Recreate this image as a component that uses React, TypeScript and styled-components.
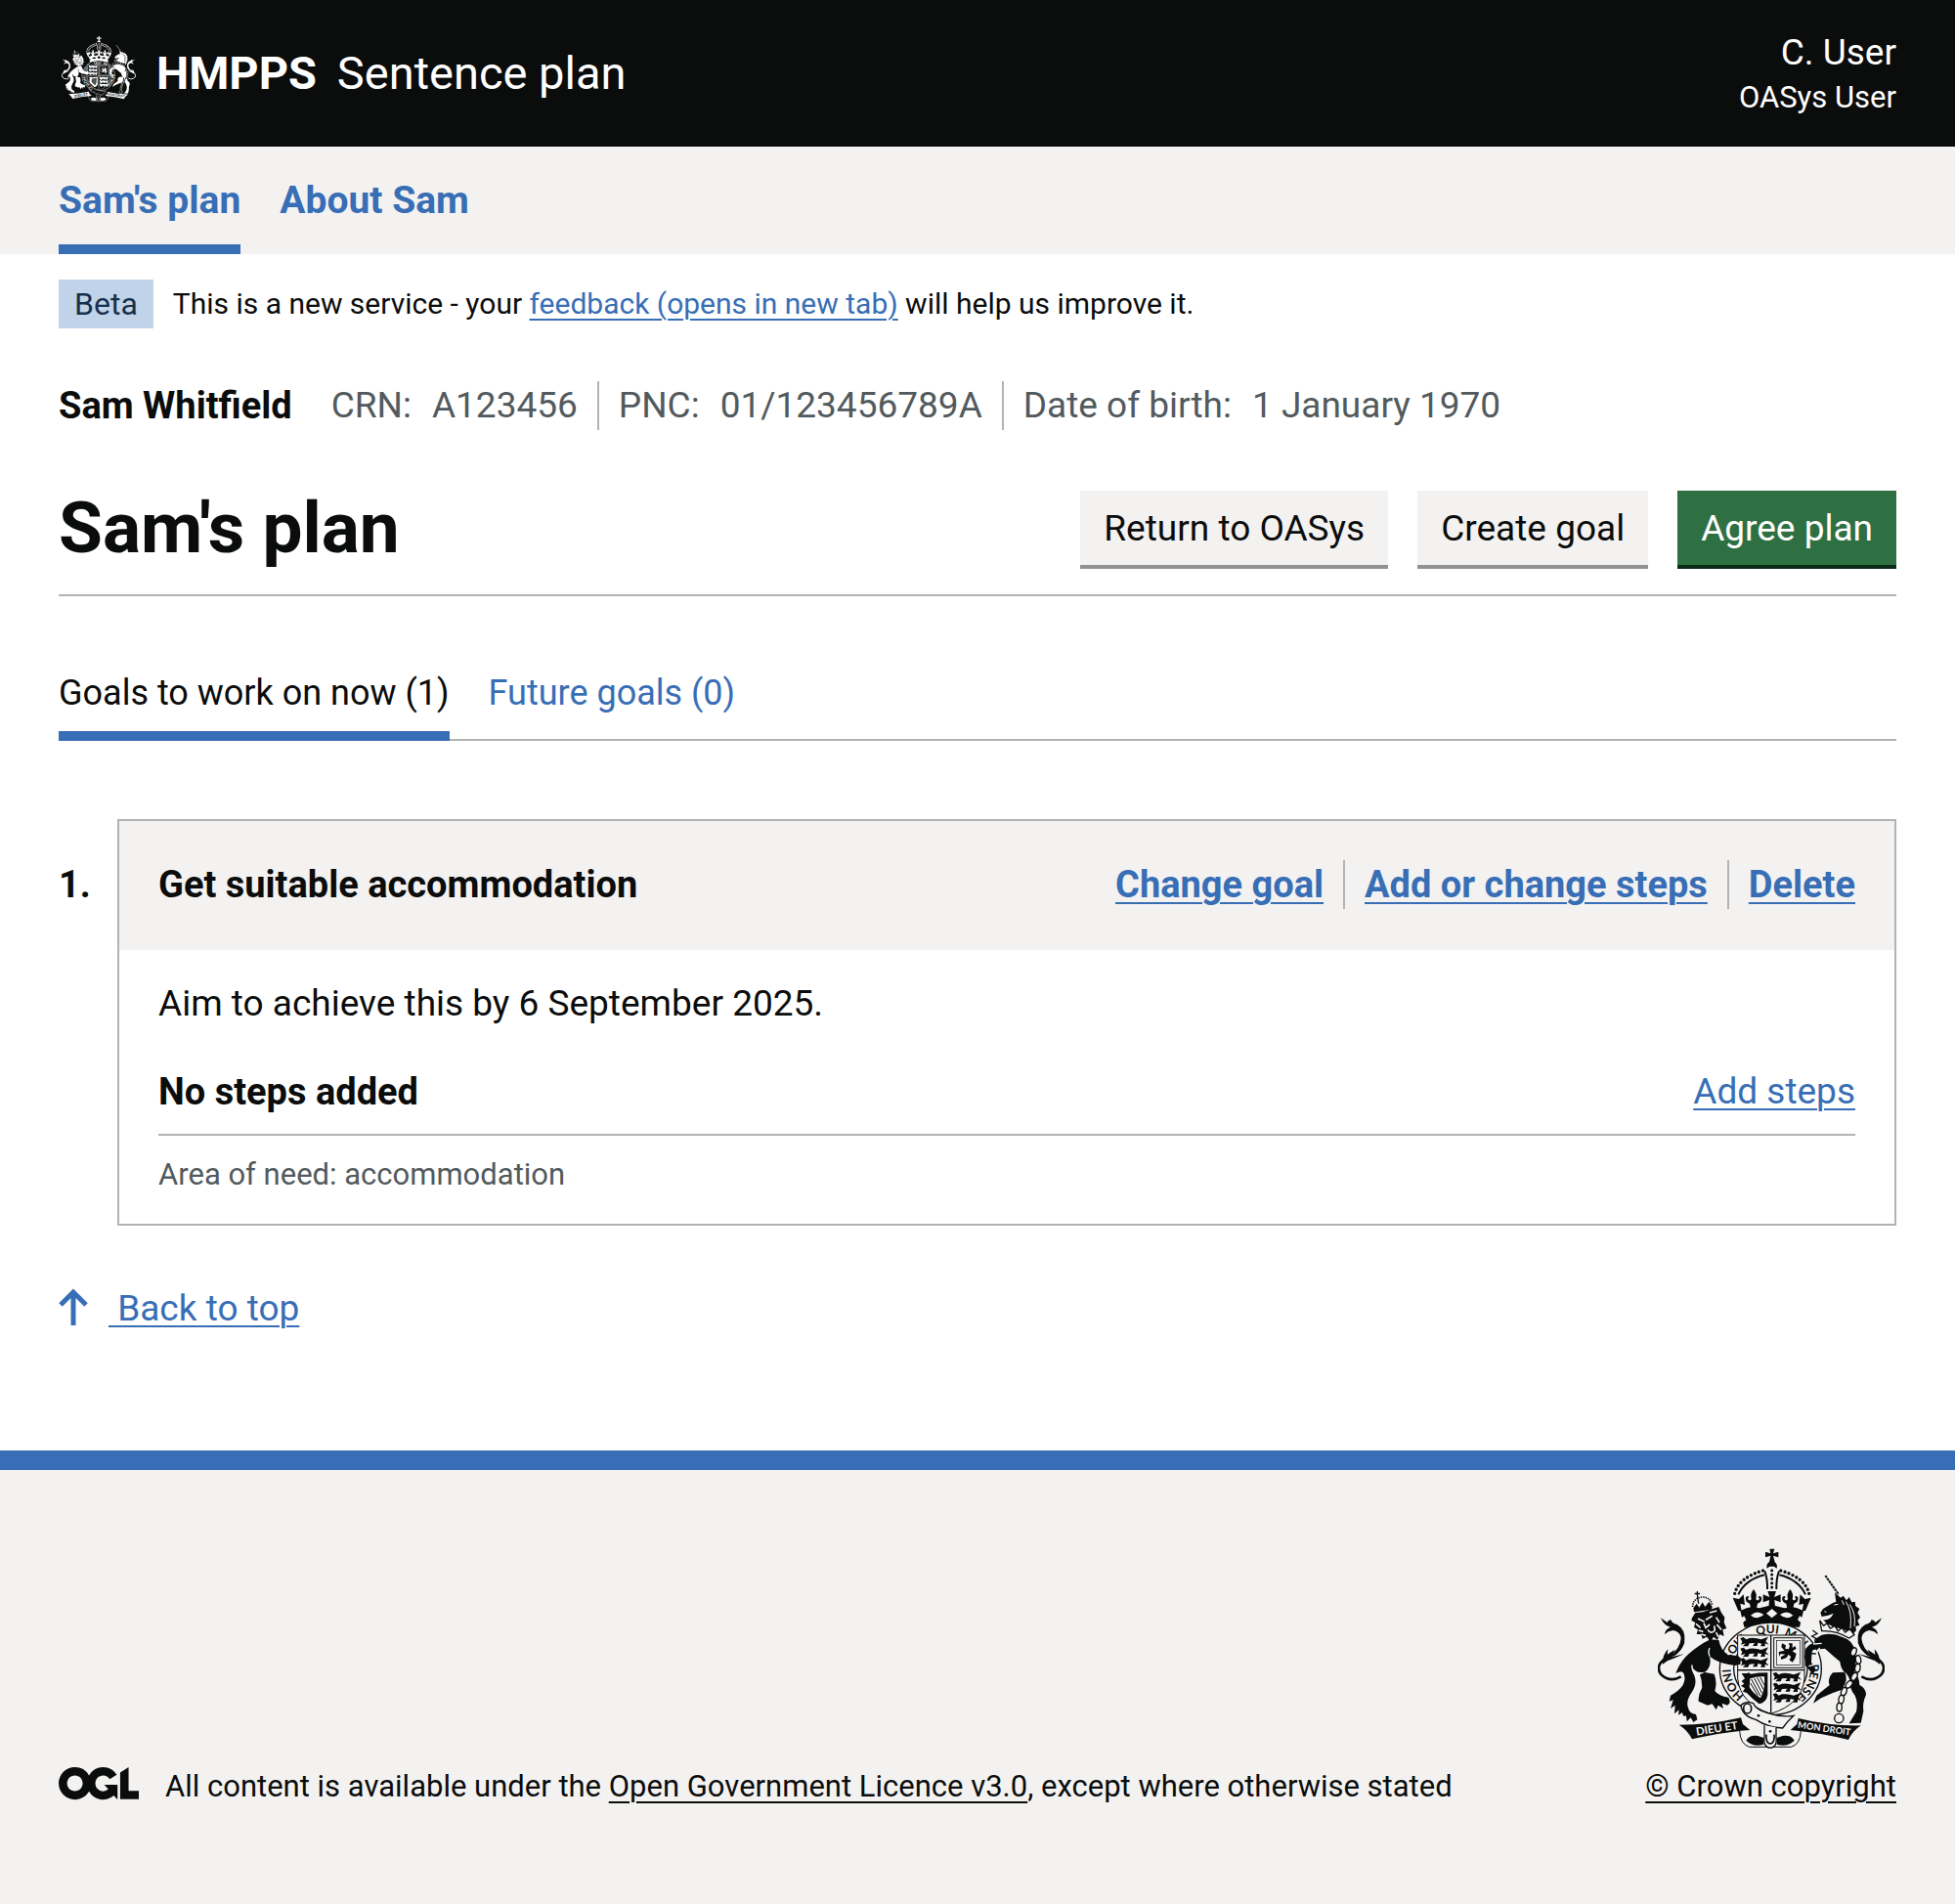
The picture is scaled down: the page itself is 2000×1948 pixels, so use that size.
import React from "react";
import styled, { createGlobalStyle } from "styled-components";

const colour = {
  ink: "#0b0c0c",
  paper: "#ffffff",
  muted: "#f3f2f1",
  link: "#386eb5",
  border: "#b1b3b5",
  secondary: "#525a5e",
};

const size = {
  small: "31px",
  body: "37px",
  bold: "38px",
  brand: "47px",
  title: "73px",
};

const GlobalStyle = createGlobalStyle`
  *, *::before, *::after { box-sizing: border-box; }
  body {
    margin: 0;
    background: ${colour.paper};
    color: ${colour.ink};
    font-family: Roboto, "Liberation Sans", sans-serif;
    font-size: ${size.body};
    line-height: 50px;
  }
  h1, h2, h3, p, ul, ol, dl, dd { margin: 0; padding: 0; }
  h2, h3 { font-size: ${size.bold}; }
  ul, ol { list-style: none; }
`;

const Header = styled.header`
  display: flex;
  align-items: center;
  justify-content: space-between;
  min-height: 150px;
  padding: 0 60px;
  background: ${colour.ink};
  color: ${colour.paper};
`;

const Brand = styled.a`
  display: flex;
  align-items: center;
  gap: 21px;
  padding-left: 3px;
  color: inherit;
  font-size: ${size.brand};
  text-decoration: none;

  svg { margin-bottom: 8px; }
`;

const UserInfo = styled.div`
  display: flex;
  flex-direction: column;
  text-align: right;
`;

const SmallText = styled.span`
  font-size: ${size.small};
  line-height: 42px;
`;

const Nav = styled.nav`
  padding: 30px 60px 0;
  background: ${colour.muted};
`;

const NavList = styled.ul`
  display: flex;
  gap: 40px;
`;

const NavLink = styled.a<{ $current?: boolean }>`
  display: block;
  padding-bottom: 20px;
  border-bottom: 10px solid ${(p) => (p.$current ? colour.link : "transparent")};
  color: ${colour.link};
  font-size: 39px;
  font-weight: 700;
  text-decoration: none;
`;

const Page = styled.div`
  padding: 26px 60px 120px;
`;

const PhaseBanner = styled.div`
  display: flex;
  align-items: center;
  gap: 20px;
  font-size: 30px;
`;

const Tag = styled.strong`
  padding: 0 16px;
  background: #c1d3e8;
  color: #16304e;
  font-size: 32px;
  font-weight: 400;
`;

const Link = styled.a<{ $dark?: boolean }>`
  color: ${(p) => (p.$dark ? colour.ink : colour.link)};
  text-decoration: underline;
  text-decoration-thickness: 2px;
  text-underline-offset: 5px;
`;

const PersonBar = styled.div`
  display: flex;
  gap: 40px;
  margin-top: 54px;
`;

const PersonName = styled.strong`
  font-size: ${size.bold};
`;

const PersonDetails = styled.dl`
  display: flex;
  color: ${colour.secondary};
`;

const Detail = styled.div`
  display: flex;
  gap: 21px;
  padding-right: 20px;

  & + & {
    padding-left: 20px;
    border-left: 2px solid ${colour.border};
  }
`;

const TitleRow = styled.div`
  display: flex;
  align-items: center;
  justify-content: space-between;
  margin-top: 62px;
  padding-bottom: 30px;
  border-bottom: 2px solid ${colour.border};
`;

const Title = styled.h1`
  font-size: ${size.title};
  line-height: 76px;
`;

const Actions = styled.div`
  display: flex;
  gap: 30px;
`;

const Button = styled.button<{ $primary?: boolean }>`
  padding: 14px 24px 12px;
  border: 0;
  background: ${(p) => (p.$primary ? "#2f7042" : colour.muted)};
  box-shadow: 0 4px 0 ${(p) => (p.$primary ? "#0b2c19" : "#919191")};
  color: ${(p) => (p.$primary ? colour.paper : colour.ink)};
  font: inherit;
`;

const Tabs = styled.ul`
  display: flex;
  gap: 40px;
  margin-top: 74px;
  box-shadow: inset 0 -2px 0 ${colour.border};
`;

const Tab = styled.a<{ $current?: boolean }>`
  display: block;
  padding-bottom: 14px;
  border-bottom: 10px solid ${(p) => (p.$current ? colour.link : "transparent")};
  color: ${(p) => (p.$current ? colour.ink : colour.link)};
  font-size: 36px;
  text-decoration: none;
`;

const GoalItem = styled.li`
  display: grid;
  grid-template-columns: 60px 1fr;
  margin-top: 80px;
`;

const GoalNumber = styled.span`
  padding-top: 42px;
  font-size: ${size.bold};
  font-weight: 700;
`;

const Card = styled.article`
  border: 2px solid ${colour.border};
`;

const CardHeader = styled.div`
  display: flex;
  justify-content: space-between;
  padding: 40px 40px 42px;
  background: ${colour.muted};
`;

const LinkList = styled.ul`
  display: flex;
  font-size: ${size.bold};
  font-weight: 700;

  li + li {
    margin-left: 20px;
    padding-left: 20px;
    border-left: 2px solid ${colour.border};
  }
`;

const CardBody = styled.div`
  padding: 30px 40px;
`;

const StepsRow = styled.div`
  display: flex;
  justify-content: space-between;
  margin-top: 40px;
  padding-bottom: 18px;
  border-bottom: 2px solid ${colour.border};
`;

const Area = styled.p`
  padding-top: 20px;
  color: ${colour.secondary};
  font-size: ${size.small};
  line-height: 40px;
`;

const BackToTop = styled.div`
  display: flex;
  align-items: center;
  gap: 20px;
  margin-top: 60px;
  color: ${colour.link};
`;

const Footer = styled.footer`
  display: flex;
  align-items: flex-end;
  justify-content: space-between;
  padding: 80px 60px 100px;
  border-top: 20px solid ${colour.link};
  background: ${colour.muted};
  font-size: ${size.small};
  line-height: 40px;
`;

const Licence = styled.div`
  display: flex;
  align-items: flex-start;
  gap: 27px;
`;

const Copyright = styled.div`
  display: flex;
  flex-direction: column;
  align-items: center;
  gap: 19px;
`;

const Picture = styled.svg`
  display: block;
  flex: none;
`;

function TailShape() {
  return (
    <g>
      <path
        d="M174 464Q150 478 128 468Q104 458 106 434Q110 414 140 402Q172 388 182 356"
        fill="none"
        stroke="currentColor"
        strokeWidth="8"
      />
      <path
        d="M112 284L132 298Q134 290 144 290Q144 300 162 304Q188 320 185 352Q182 384 146 406Q160 392 154 382Q152 394 140 402Q172 376 174 346Q172 326 150 322Q134 324 124 334Q126 318 142 312Q122 308 112 284Z"
        fill="currentColor"
      />
      <path d="M118 426Q116 398 134 380L132 396L154 382L146 404L184 394Q150 410 132 416Z" fill="currentColor" />
    </g>
  );
}

function Fleur({ x }: { x: number }) {
  return (
    <path
      transform={`translate(${x} 226)`}
      d="M0-30Q12-16 7 0Q10 6 16 2Q20-3 14-6Q18-12 24-5Q28 8 12 14L8 34H-8L-12 14Q-28 8-24-5Q-18-12-14-6Q-20-3-16 2Q-10 6-7 0Q-12-16 0-30Z"
      fill="currentColor"
    />
  );
}

function HalfCrown() {
  return (
    <g>
      <path d="M339 209Q352 158 432 137" fill="none" stroke="currentColor" strokeWidth="10" strokeLinecap="round" strokeDasharray="0 13" />
      <path d="M350 212Q372 166 430 152" fill="none" stroke="currentColor" strokeWidth="6" />
      <path d="M431 140Q440 164 439 196" fill="none" stroke="currentColor" strokeWidth="6" />
      <path d="M333 222L352 226L366 212L370 244L356 240L360 262L350 262Z" fill="currentColor" />
      <Fleur x={397} />
    </g>
  );
}

const garterWords: [string, number][] = [
  ["HONI", 22],
  ["SOIT", 140],
  ["QUI", 256],
  ["MAL", 340],
  ["Y", 424],
  ["PENSE", 466],
];

const lions: [number, number][] = [
  [360, 354],
  [360, 386],
  [360, 418],
  [460, 462],
  [460, 494],
  [460, 526],
];

const chain: [number, number, number][] = [
  [704, 388, 20],
  [718, 412, -10],
  [716, 438, 10],
  [706, 464, 30],
  [690, 488, 40],
  [674, 510, 20],
  [666, 534, 10],
  [660, 558, 0],
];

function Crest({ width, paper }: { width: number; paper: string }) {
  const id = `garter-${width}`;
  return (
    <Picture width={width} viewBox="103 70 696 616" aria-hidden="true">
      <defs>
        <path id={id} d="M387 534A122 109 0 0 1 327 440A122 109 0 0 1 449 331A122 109 0 0 1 571 440A122 109 0 0 1 449 549" />
      </defs>

      <TailShape />
      <g transform="translate(902 0) scale(-1 1)">
        <TailShape />
      </g>

      <path d="M446 72H461L457 86L473 81V98L457 93L462 112H445L449 93L433 98V81L449 86Z" fill="currentColor" />
      <path d="M438 132Q434 112 453 110Q472 112 468 132L460 126H446Z" fill="currentColor" />
      <path d="M453 138V192" stroke="currentColor" strokeWidth="9" strokeLinecap="round" strokeDasharray="0 13" />
      <HalfCrown />
      <g transform="translate(906 0) scale(-1 1)">
        <HalfCrown />
      </g>
      <path d="M440 202H466L460 220L480 212V236L461 229L464 262H442L445 229L426 236V212L446 220Z" fill="currentColor" />
      <path d="M356 262Q376 252 392 250L414 254L430 250Q453 242 476 250L492 254L514 250Q530 252 550 262L538 312H368Z" fill="currentColor" />
      <path d="M436 270L453 256L470 270L453 284ZM388 276Q408 258 428 274Q408 292 388 276ZM478 274Q498 258 518 276Q498 292 478 274ZM356 286L368 278L374 290L362 300ZM532 290L538 278L552 286L544 300Z" fill={paper} />

      <ellipse cx="449" cy="440" rx="156" ry="142" fill={paper} stroke="currentColor" strokeWidth="4" />
      <ellipse cx="449" cy="440" rx="113" ry="101" fill={paper} stroke="currentColor" strokeWidth="4" />
      {garterWords.map(([word, offset]) => (
        <text key={word} fill="currentColor" fontFamily="Lato, sans-serif" fontSize="36" fontWeight="700">
          <textPath href={`#${id}`} startOffset={offset}>
            {word}
          </textPath>
        </text>
      ))}

      <path d="M348 337H553V470Q546 548 450 578Q356 548 348 470Z" fill={paper} stroke="currentColor" strokeWidth="3" />
      <path d="M450 337V576M348 444H553" stroke="currentColor" strokeWidth="4" />
      {lions.map(([x, y]) => (
        <path
          key={`${x}-${y}`}
          transform={`translate(${x} ${y})`}
          d="M-4-8L6-11L14-4L24-8Q44-10 60-4L82-12L74 2L84 12L72 8L72 17H58L62 9L50 6L48 16H34L40 7L24 8L20 17H4L12 8L-2 12L2 3Z"
          fill="currentColor"
        />
      ))}
      <rect x="459" y="345" width="88" height="92" fill="none" stroke="currentColor" strokeWidth="3" />
      <rect x="467" y="353" width="72" height="76" fill="none" stroke="currentColor" strokeWidth="2" />
      <path
        d="M484 362L496 368L494 378L504 380L508 370L504 362L516 362L516 376L524 370L528 378L516 386L528 394L524 408L516 420L506 412L512 404L504 396L498 406L482 412L480 404L494 396L480 394L476 402L474 388L492 384L482 374Z"
        fill="currentColor"
      />
      <path d="M360 454H378Q382 448 388 456Q412 452 440 452V520Q436 544 414 548Q396 536 376 514L364 510L370 500L358 492L368 486L360 478L370 470Z" fill="currentColor" />
      <path d="M386 470Q410 462 430 464Q434 500 418 530Q394 514 384 496Z" fill={paper} />
      <path d="M390 472L418 524M399 469L423 515M408 467L427 503M417 466L430 490M387 484L410 522" stroke="currentColor" strokeWidth="3" />

      <path
        d="M264 350L244 360Q208 382 188 404Q168 426 158 454Q178 444 182 454Q190 470 180 490Q168 508 142 522L138 540L150 536L142 562L156 552L154 578L168 566L166 582L178 574Q180 590 190 584L192 602L204 590L212 604L224 596L220 580Q200 578 196 560Q188 540 206 514Q224 490 216 464Q208 444 206 432Q222 456 244 450L276 456Q286 480 278 508Q290 524 320 528Q330 546 316 552L300 546L304 562L288 552L282 566L270 548L256 552L228 540Q226 520 238 500Q240 480 232 458Q272 444 262 402Q286 420 318 426L340 430L356 426L358 408L348 400L318 398Q296 382 290 352Z"
        fill="currentColor"
      />
      <path d="M208 428Q206 446 220 462M222 510L238 496M262 402Q256 386 262 376" fill="none" stroke={paper} strokeWidth="4" />
      <path
        d="M208 284L218 268L240 266L290 250L298 268L308 282L306 298L314 316L302 320L306 340L292 334L286 352L274 342L264 358L254 342L240 348L236 334L222 334L226 320L214 312L218 298L206 292Z"
        fill="currentColor"
      />
      <path
        d="M226 286L246 296M250 290L270 278M244 300L250 314L262 304M256 320Q266 336 278 322L276 308M220 302L234 314M228 322L242 326M282 282L292 298M284 304L298 320M282 328L288 342M236 334L250 338M262 268L284 262"
        fill="none"
        stroke={paper}
        strokeWidth="5"
      />
      <path d="M210 250Q210 224 238 220Q266 220 270 246" fill="none" stroke="currentColor" strokeWidth="5" strokeDasharray="4 3" />
      <path d="M212 254L222 240L230 252L240 236L248 250L260 234L270 250L268 258L214 266Z" fill="currentColor" />
      <path d="M222 202H226V207H232V212H226L230 240H226L222 212H216V207H222Z" fill="currentColor" />

      <path d="M617 154L658 212" stroke="currentColor" strokeWidth="6" strokeDasharray="8 2" />
      <path
        d="M602 268L610 256L640 238L650 234L646 206L664 222L672 216L682 230L690 220L698 236L708 234L710 248L722 256L716 268L724 282L716 292L722 306L710 310L712 322L700 336Q680 318 650 314Q624 306 610 290Q632 292 642 270L626 276L606 280Z"
        fill="currentColor"
      />
      <path d="M644 244L656 242M680 234Q700 262 694 316M692 242Q712 272 706 310M614 264L620 266M668 230L674 244" fill="none" stroke={paper} strokeWidth="3" />
      <path d="M600 292L612 308L622 300L632 316L646 308L656 324L668 314L678 328L692 318L706 336L690 346Q650 322 606 324Z" fill={paper} stroke="currentColor" strokeWidth="4" />
      <path
        d="M584 350L606 336Q640 328 668 342Q704 352 708 388Q714 424 706 452Q722 466 722 490Q742 500 742 520Q730 545 734 570L726 606L690 608L712 572Q718 544 708 522Q690 500 692 474Q686 456 676 450Q690 470 668 504L640 514L604 530L580 546L590 522L630 490Q622 470 640 452L676 450Q664 440 662 418Q640 400 616 378L576 382L574 420L588 444L578 456L556 430L554 388Q556 368 584 360Z"
        fill="currentColor"
      />
      <path d="M600 376Q588 388 592 400M580 364L606 362M566 432L582 428" fill="none" stroke={paper} strokeWidth="4" />
      <path d="M578 322L592 332L576 340L590 348" fill="none" stroke="currentColor" strokeWidth="4" />
      {chain.map(([x, y, r]) => (
        <ellipse key={y} cx={x} cy={y} rx="8" ry="13" transform={`rotate(${r} ${x} ${y})`} fill={paper} stroke="currentColor" strokeWidth="4" />
      ))}
      <circle cx="659" cy="592" r="14" fill={paper} stroke="currentColor" strokeWidth="4" />

      <path d="M354 630Q356 672 384 680H438M542 632Q540 672 512 680H458" fill="none" stroke="currentColor" strokeWidth="3" />
      <path d="M374 660Q384 642 410 646L428 652V672Q396 682 374 660ZM522 660Q512 642 486 646L468 652V672Q500 682 522 660Z" fill="currentColor" />
      <path d="M168 612Q264 612 358 590L364 610L386 628Q300 634 208 656Q196 630 168 612Z" fill="currentColor" />
      <path d="M726 614Q630 616 534 592L530 610L510 628Q600 636 688 658Q700 632 726 614Z" fill="currentColor" />
      <text x="284" y="635" textAnchor="middle" transform="rotate(-9 284 622)" fill={paper} fontFamily="Lato, sans-serif" fontSize="34" fontWeight="700">
        DIEU ET
      </text>
      <text x="614" y="633" textAnchor="middle" transform="rotate(8 614 622)" fill={paper} fontFamily="Lato, sans-serif" fontSize="28" fontWeight="700">
        MON DROIT
      </text>

      <path
        d="M358 552Q372 538 396 546Q404 566 440 576Q480 590 520 584Q502 600 486 622Q440 620 404 596Q362 586 358 552Z"
        fill={paper}
        stroke="currentColor"
        strokeWidth="4"
      />
      <ellipse cx="378" cy="562" rx="12" ry="15" fill={paper} stroke="currentColor" strokeWidth="5" />
      <circle cx="412" cy="584" r="4" fill="currentColor" />
      <circle cx="446" cy="602" r="4" fill="currentColor" />
      <path d="M430 614V650Q426 682 448 683Q470 682 466 650V620" fill={paper} stroke="currentColor" strokeWidth="4" />
      <path d="M436 642Q434 668 448 670Q462 668 460 642" fill="none" stroke="currentColor" strokeWidth="5" />
      <circle cx="448" cy="632" r="4" fill="currentColor" />
    </Picture>
  );
}

function LicenceLogo() {
  return (
    <Picture width="82" viewBox="0 0 483 196" role="img" aria-label="Open Government Licence">
      <path
        fill="currentColor"
        d="M421.500 142.800V.100l-50.700 32.300v161.100h112.400v-50.700zm-122.300-9.600A47.120 47.120 0 0 1 221 97.800c0-26 21.100-47.100 47.100-47.100 16.700 0 31.400 8.700 39.700 21.800l42.700-27.200A97.630 97.630 0 0 0 268.100 0c-36.500 0-68.300 20.100-85.100 49.700A98 98 0 0 0 97.800 0C43.900 0 0 43.900 0 97.800s43.900 97.800 97.800 97.800c36.500 0 68.300-20.100 85.100-49.700a97.760 97.760 0 0 0 149.600 25.400l19.400 22.200h3v-87.800h-80l24.300 27.500zM97.800 145c-26 0-47.100-21.100-47.100-47.100s21.100-47.100 47.100-47.100 47.100 21.100 47.100 47.100S123.800 145 97.800 145"
      />
    </Picture>
  );
}

function UpArrow() {
  return (
    <Picture width="31" height="42" viewBox="0 0 31 42" aria-hidden="true">
      <path d="M15 38V4M2 17L15 4L28 17" fill="none" stroke="currentColor" strokeWidth="5" />
    </Picture>
  );
}

export default function App() {
  return (
    <>
      <GlobalStyle />
      <Header id="top">
        <Brand href="#home">
          <Crest width={76} paper={colour.ink} />
          <strong>HMPPS</strong>
          <span>Sentence plan</span>
        </Brand>
        <UserInfo>
          <span>C. User</span>
          <SmallText>OASys User</SmallText>
        </UserInfo>
      </Header>

      <Nav aria-label="Primary">
        <NavList>
          <li>
            <NavLink href="#plan" aria-current="page" $current>
              Sam's plan
            </NavLink>
          </li>
          <li>
            <NavLink href="#about">About Sam</NavLink>
          </li>
        </NavList>
      </Nav>

      <Page>
        <PhaseBanner>
          <Tag>Beta</Tag>
          <p>
            This is a new service - your <Link href="#feedback">feedback (opens in new tab)</Link> will help us improve it.
          </p>
        </PhaseBanner>

        <PersonBar>
          <PersonName>Sam Whitfield</PersonName>
          <PersonDetails>
            <Detail>
              <dt>CRN:</dt>
              <dd>A123456</dd>
            </Detail>
            <Detail>
              <dt>PNC:</dt>
              <dd>01/123456789A</dd>
            </Detail>
            <Detail>
              <dt>Date of birth:</dt>
              <dd>1 January 1970</dd>
            </Detail>
          </PersonDetails>
        </PersonBar>

        <main>
          <TitleRow>
            <Title>Sam's plan</Title>
            <Actions>
              <Button type="button">Return to OASys</Button>
              <Button type="button">Create goal</Button>
              <Button type="button" $primary>
                Agree plan
              </Button>
            </Actions>
          </TitleRow>

          <Tabs>
            <li>
              <Tab href="#current" aria-current="page" $current>
                Goals to work on now (1)
              </Tab>
            </li>
            <li>
              <Tab href="#future">Future goals (0)</Tab>
            </li>
          </Tabs>

          <ol>
            <GoalItem>
              <GoalNumber>1.</GoalNumber>
              <Card>
                <CardHeader>
                  <h2>Get suitable accommodation</h2>
                  <LinkList>
                    <li>
                      <Link href="#change-goal">Change goal</Link>
                    </li>
                    <li>
                      <Link href="#change-steps">Add or change steps</Link>
                    </li>
                    <li>
                      <Link href="#delete">Delete</Link>
                    </li>
                  </LinkList>
                </CardHeader>
                <CardBody>
                  <p>Aim to achieve this by 6 September 2025.</p>
                  <StepsRow>
                    <h3>No steps added</h3>
                    <Link href="#add-steps">Add steps</Link>
                  </StepsRow>
                  <Area>Area of need: accommodation</Area>
                </CardBody>
              </Card>
            </GoalItem>
          </ol>
        </main>

        <BackToTop>
          <UpArrow />
          <Link href="#top">&nbsp;Back to top</Link>
        </BackToTop>
      </Page>

      <Footer>
        <Licence>
          <LicenceLogo />
          <p>
            All content is available under the{" "}
            <Link href="#licence" $dark>
              Open Government Licence v3.0
            </Link>
            , except where otherwise stated
          </p>
        </Licence>
        <Copyright>
          <Crest width={232} paper={colour.muted} />
          <Link href="#copyright" $dark>
            © Crown copyright
          </Link>
        </Copyright>
      </Footer>
    </>
  );
}
